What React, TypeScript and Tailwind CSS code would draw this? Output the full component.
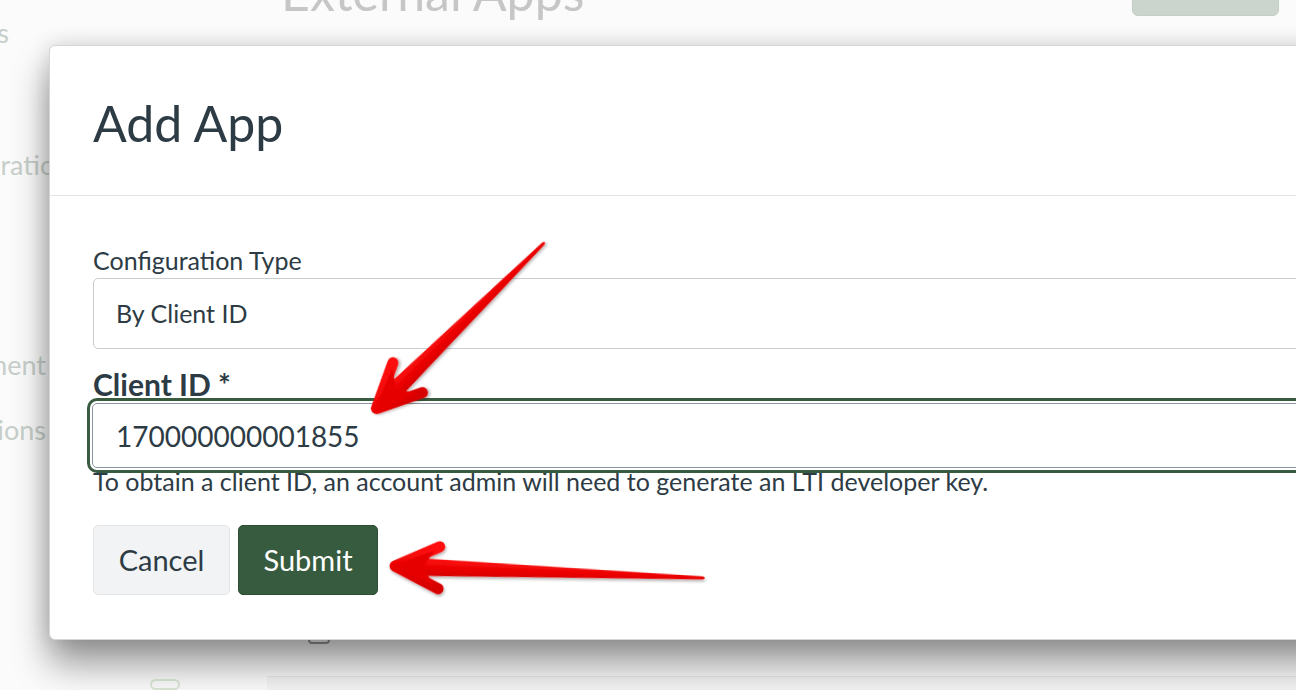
import React from 'react';

type ArrowProps = { tipX: number; tipY: number; tailX: number; tailY: number };

// red annotation arrow, drawn along +x then rotated into place
function Arrow({ tipX, tipY, tailX, tailY }: ArrowProps) {
	const dx = tailX - tipX;
	const dy = tailY - tipY;
	const len = Math.sqrt(dx * dx + dy * dy);
	const angle = (Math.atan2(dy, dx) * 180) / Math.PI;
	return (
		<g transform={`translate(${tipX} ${tipY}) rotate(${angle})`} filter="url(#arrowShadow)">
			<path
				d={`M 18 -9 L ${len - 2} -1.6 Q ${len + 1.5} 0 ${len - 2} 1.6 L 18 9 Z`}
				fill="url(#arrowRed)"
			/>
			<polyline
				points="46,-21 2,0 46,21"
				fill="none"
				stroke="url(#arrowRed)"
				strokeWidth={11}
				strokeLinecap="round"
				strokeLinejoin="round"
			/>
			<path d="M 0 0 L 41 -17 L 30 0 L 41 17 Z" fill="#e60005" />
		</g>
	);
}

function BackgroundPage() {
	return (
		<div className="flex h-full w-full">
			{/* <Nav> */}
			<div className="flex w-[49px] shrink-0 flex-col text-[27px] text-[#c7cfca]">
				<div className="mt-[16px] flex h-[34px] w-[9px] items-center justify-end whitespace-nowrap">
					Apps
				</div>
				<div className="mt-[98px] flex h-[34px] w-[82px] items-center justify-end whitespace-nowrap">
					Integrations
				</div>
				<div className="mt-[166px] flex h-[34px] w-[46px] items-center justify-end whitespace-nowrap">
					Management
				</div>
				<div className="mt-[31px] flex h-[34px] w-[46px] items-center justify-end whitespace-nowrap">
					Collaborations
				</div>
				<div className="mt-[232px] ml-[150px] h-[30px] w-[30px] rounded-full border-2 border-[#dbe8d6]" />
			</div>
			{/* </Nav> */}

			{/* <Main> */}
			<div className="flex flex-1 flex-col">
				<div className="flex h-[44px] items-start">
					<h1 className="-mt-[33px] ml-[232px] text-[50px] leading-[50px] text-[#c6c6c6]">
						External Apps
					</h1>
					<div className="-mt-[10px] ml-auto mr-[17px] h-[26px] w-[147px] rounded-[6px] border border-[#c3cec5] bg-[#cbd5cd]" />
				</div>
				<div className="mt-[584px] flex gap-[90px] pl-[259px]">
					<div className="h-[16px] w-[22px] rounded-[4px] border-2 border-[#9a9a9a]" />
					<div className="h-[8px] w-[8px] rounded-full bg-[#9a9a9a]" />
				</div>
				<div className="mt-auto ml-[218px] h-[14px] border-t border-[#e9e9e9] bg-[#f4f4f4]" />
			</div>
			{/* </Main> */}
		</div>
	);
}

function AddAppDialog() {
	return (
		<div className="absolute left-[49px] top-[45px] h-[595px] w-[1290px] rounded-[6px] border border-[#d6d6d6] bg-white shadow-[0_0_22px_rgba(0,0,0,0.14),0_24px_36px_rgba(0,0,0,0.4)]">
			{/* <Header> */}
			<div className="flex h-[150px] items-center border-b border-[#e2e2e2] pl-[43px]">
				<h2 className="mt-[4px] text-[50px] font-normal leading-none text-[#2d3b45]">Add App</h2>
			</div>
			{/* </Header> */}

			{/* <Body> */}
			<div className="pl-[43px] pt-[49px]">
				<label className="block text-[25px] leading-[30px] text-[#2d3b45]">Configuration Type</label>
				<div className="mt-[3px] flex h-[71px] items-center rounded-[5px] border border-[#c7cdd1] pl-[22px] text-[25px] text-[#2d3b45]">
					By Client ID
				</div>

				<label className="mt-[21px] block text-[30px] font-bold leading-[29px] text-[#2d3b45]">
					Client ID *
				</label>
				<div className="relative z-10 ml-[-1px] mt-[4px] flex h-[65px] items-center rounded-[5px] border border-[#8b969e] bg-white pl-[23px] text-[28px] text-[#2d3b45] outline-3 outline-offset-2 outline-[#395b3f]">
					170000000001855
				</div>
				<p className="text-[25px] leading-[26px] text-[#2d3b45]">
					To obtain a client ID, an account admin will need to generate an LTI developer key.
				</p>

				<div className="mt-[31px] flex gap-[8px]">
					<button className="flex h-[70px] w-[137px] items-center justify-center rounded-[5px] border border-[#e3e6e8] bg-[#f2f3f4] text-[29px] text-[#2d3b45]">
						Cancel
					</button>
					<button className="flex h-[70px] w-[140px] items-center justify-center rounded-[5px] border border-[#2f4f35] bg-[#375b3e] text-[29px] text-white">
						Submit
					</button>
				</div>
			</div>
			{/* </Body> */}
		</div>
	);
}

export default function App() {
	return (
		<div className="relative h-[690px] w-[1296px] overflow-hidden bg-[#fbfbfb] font-[Lato,sans-serif]">
			<BackgroundPage />
			<AddAppDialog />

			{/* <Annotations> */}
			<svg className="pointer-events-none absolute inset-0 z-20" width={1296} height={690}>
				<defs>
					<linearGradient id="arrowRed" x1="0" y1="0" x2="0" y2="1">
						<stop offset="0" stopColor="#ff0a0a" />
						<stop offset="1" stopColor="#d60000" />
					</linearGradient>
					<filter id="arrowShadow" x="-20%" y="-20%" width="140%" height="140%">
						<feDropShadow dx="1" dy="2" stdDeviation="1.5" floodOpacity="0.3" />
					</filter>
				</defs>
				<Arrow tipX={375} tipY={410} tailX={545} tailY={242} />
				<Arrow tipX={393} tipY={566} tailX={705} tailY={578} />
			</svg>
			{/* </Annotations> */}
		</div>
	);
}
